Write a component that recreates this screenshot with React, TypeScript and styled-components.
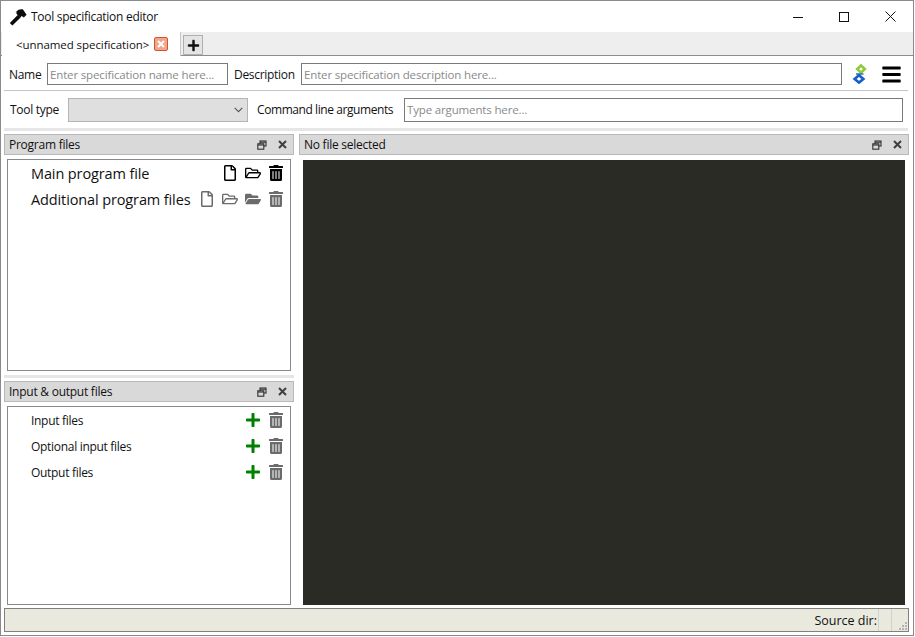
import React from 'react';
import styled, { createGlobalStyle } from 'styled-components';
import { FaBars, FaFolderOpen, FaPlus, FaRegFile, FaRegFolderOpen, FaTrashAlt } from 'react-icons/fa';

const GlobalStyle = createGlobalStyle`
  html, body {
    margin: 0;
    padding: 0;
    background: #fff;
  }
  body {
    font-family: "Open Sans", "Noto Sans", sans-serif;
    color: #111;
  }
`;

const Window = styled.div`
  box-sizing: border-box;
  width: 914px;
  height: 636px;
  border: 1px solid #8a8a8a;
  background: #fff;
  display: flex;
  flex-direction: column;
`;

const TitleBar = styled.div`
  height: 31px;
  display: flex;
  align-items: center;
  padding-left: 8px;
  font-size: 12px;
`;

const TitleText = styled.span`
  flex: 1;
  margin-left: 4px;
  letter-spacing: -0.28px;
`;

const WinButton = styled.div`
  width: 46px;
  height: 31px;
  display: flex;
  align-items: center;
  justify-content: center;
`;

const TabBar = styled.div`
  height: 24px;
  box-sizing: border-box;
  background: #eeeeee;
  border-bottom: 1px solid #8c8c8c;
  display: flex;
  align-items: flex-start;
  padding-left: 1px;
`;

const Tab = styled.div`
  width: 179px;
  height: 24px;
  background: #fff;
  box-sizing: border-box;
  border-right: 1px solid #c8c8c8;
  display: flex;
  align-items: center;
  padding-left: 14px;
  gap: 5px;
  font-size: 11.5px;
  letter-spacing: -0.07px;
`;

const TabClose = styled.div`
  width: 14px;
  height: 14px;
  box-sizing: border-box;
  background: #f0a68c;
  border: 1px solid #d4532f;
  border-radius: 2px;
  color: #fff;
  display: flex;
  align-items: center;
  justify-content: center;
`;

const AddTab = styled.div`
  width: 20px;
  height: 20px;
  margin-left: 2px;
  margin-top: 3px;
  box-sizing: border-box;
  background: #e4e4e4;
  border: 1px solid #b0b0b0;
  display: flex;
  align-items: center;
  justify-content: center;
`;

const FormRow = styled.div<{ $height: number; $rule?: boolean }>`
  height: ${(p) => p.$height}px;
  margin: 0 5px 0 3px;
  padding-top: ${(p) => (p.$rule ? 2 : 0)}px;
  display: flex;
  align-items: center;
  font-size: 12px;
  box-sizing: border-box;
  border-bottom: ${(p) => (p.$rule ? '1px solid #c4c4c4' : 'none')};
`;

const Label = styled.label<{ $left: number; $width: number }>`
  margin-left: ${(p) => p.$left}px;
  width: ${(p) => p.$width}px;
  flex: none;
  letter-spacing: -0.3px;
  white-space: nowrap;
`;

const WideLabel = styled(Label)`
  letter-spacing: -0.42px;
`;

const TextInput = styled.input<{ $width: number; $height: number }>`
  box-sizing: border-box;
  width: ${(p) => p.$width}px;
  height: ${(p) => p.$height}px;
  flex: none;
  border: 1px solid #7a7a7a;
  padding: 0 2px;
  font: 11.5px "Open Sans", sans-serif;
  letter-spacing: -0.15px;
  outline: none;
  &::placeholder {
    color: #8a8a8a;
    opacity: 1;
  }
`;

const Combo = styled.div`
  box-sizing: border-box;
  width: 180px;
  height: 24px;
  flex: none;
  background: #dfdfdf;
  border: 1px solid #b4b4b4;
  display: flex;
  align-items: center;
  justify-content: flex-end;
  padding-right: 4px;
`;

const HeadIcons = styled.div`
  display: flex;
  align-items: center;
  margin-left: 9px;
  gap: 12px;
`;

const Band = styled.div`
  height: 3px;
  margin: 0 5px 0 3px;
  background: #e6e6e6;
`;

const DockArea = styled.div`
  flex: 1;
  min-height: 0;
  margin: 3px 4px 0 3px;
  display: grid;
  grid-template-columns: 290px 1fr;
  column-gap: 5px;
`;

const LeftColumn = styled.div`
  display: grid;
  grid-template-rows: 240px 7px 1fr;
  min-height: 0;
`;

const Splitter = styled.div`
  height: 3px;
  margin-top: 1px;
  background: #e6e6e6;
`;

const Dock = styled.section`
  display: flex;
  flex-direction: column;
  min-height: 0;
`;

const DockTitle = styled.div`
  height: 21px;
  flex: none;
  box-sizing: border-box;
  background: #d9d9d9;
  border: 1px solid #b8b8b8;
  display: flex;
  align-items: center;
  padding: 0 6px 0 4px;
  font-size: 12px;
  letter-spacing: -0.25px;
`;

const DockName = styled.span`
  flex: 1;
`;

const DockButtons = styled.div`
  display: flex;
  align-items: center;
  gap: 11px;
`;

const Tree = styled.div`
  flex: 1;
  box-sizing: border-box;
  margin: 4px 3px 3px 3px;
  border: 1px solid #868a8e;
`;

const TreeRow = styled.div<{ $large?: boolean }>`
  height: 26px;
  box-sizing: border-box;
  display: flex;
  align-items: center;
  padding: 0 6px ${(p) => (p.$large ? 1 : 0)}px 23px;
  font-size: ${(p) => (p.$large ? '14.5px' : '12px')};
  letter-spacing: ${(p) => (p.$large ? '-0.12px' : '-0.3px')};
`;

const RowLabel = styled.span<{ $drop?: number }>`
  flex: 1;
  margin-top: ${(p) => p.$drop ?? 0}px;
  white-space: nowrap;
`;

const RowIcons = styled.div`
  display: flex;
  align-items: center;
  gap: 7px;
`;

const IconSlot = styled.span<{ $color: string }>`
  width: 16px;
  height: 16px;
  display: flex;
  align-items: center;
  justify-content: center;
  color: ${(p) => p.$color};
`;

const Editor = styled.div`
  flex: 1;
  margin: 5px 4px 3px 4px;
  background: #2a2b24;
`;

const StatusBar = styled.footer`
  height: 24px;
  flex: none;
  box-sizing: border-box;
  margin: 0 4px 3px 3px;
  background: #e9e9dd;
  border: 1px solid #808080;
  display: flex;
  align-items: center;
  justify-content: flex-end;
  font-size: 12.5px;
`;

const StatusText = styled.span`
  margin-right: 1px;
`;

const StatusCell = styled.div<{ $width: number }>`
  width: ${(p) => p.$width}px;
  height: 100%;
  box-sizing: border-box;
  border-left: 1px solid #d2d2c8;
  display: flex;
  align-items: flex-end;
  justify-content: flex-end;
`;

const DOCK_CLOSE = '#404040';
const FILE_GREY = '#6b6b6b';

const FloatIcon = () => (
  <svg width="10" height="10" viewBox="0 0 10 10" fill="none" stroke="#303030" strokeWidth="1.1">
    <rect x="3" y="1" width="6" height="5" />
    <path d="M3 2.2h6" />
    <rect x="0.8" y="3.8" width="6" height="5.4" fill="#d9d9d9" />
    <path d="M0.8 5h6" />
  </svg>
);

const CloseIcon = () => (
  <svg width="9" height="9" viewBox="0 0 9 9" stroke={DOCK_CLOSE} strokeWidth="2">
    <path d="M1 1l7 7M8 1l-7 7" />
  </svg>
);

const Hammer = () => (
  <svg width="18" height="18" viewBox="0 0 18 18" fill="#0c0c0c">
    <path d="M0.8 15L9 6.8l2.6 2.6-8.2 8.2z" />
    <path d="M6.5 4.5C8.5 1.5 12 0.5 14 1.5l3.6 5.2-2.8 2.8-2-1.6-1.6 1.6-4-4 1-1z" />
  </svg>
);

const Logo = () => (
  <svg width="18" height="20" viewBox="0 0 18 20" fill="none">
    <path d="M10 1.5L13.8 5 10 8.6 6.2 5z" stroke="#92c83e" strokeWidth="2.6" />
    <path d="M5 10h7.5" stroke="#1f6fa0" strokeWidth="1.4" />
    <path d="M8 11.2L12.4 15 8 18.6 3.6 15z" stroke="#1560cc" strokeWidth="2.6" />
  </svg>
);

const SmallX = () => (
  <svg width="8" height="8" viewBox="0 0 8 8" stroke="#fff" strokeWidth="2">
    <path d="M1 1l6 6M7 1L1 7" />
  </svg>
);

const DockHeader = ({ title }: { title: string }) => (
  <DockTitle>
    <DockName>{title}</DockName>
    <DockButtons>
      <FloatIcon />
      <CloseIcon />
    </DockButtons>
  </DockTitle>
);

const ioRows = ['Input files', 'Optional input files', 'Output files'];

const App = () => (
  <>
    <GlobalStyle />
    <Window>
      <TitleBar>
        <Hammer />
        <TitleText>Tool specification editor</TitleText>
        <WinButton>
          <svg width="10" height="10" viewBox="0 0 10 10" stroke="#111">
            <path d="M0 5.5h10" />
          </svg>
        </WinButton>
        <WinButton>
          <svg width="10" height="10" viewBox="0 0 10 10" fill="none" stroke="#111">
            <rect x="0.5" y="0.5" width="9" height="9" />
          </svg>
        </WinButton>
        <WinButton>
          <svg width="11" height="11" viewBox="0 0 11 11" stroke="#111">
            <path d="M0.5 0.5l10 10M10.5 0.5l-10 10" />
          </svg>
        </WinButton>
      </TitleBar>
      <TabBar>
        <Tab>
          &lt;unnamed specification&gt;
          <TabClose>
            <SmallX />
          </TabClose>
        </Tab>
        <AddTab>
          <FaPlus size={13} color="#111" />
        </AddTab>
      </TabBar>
      <FormRow $height={35} $rule>
        <Label $left={5} $width={38}>Name</Label>
        <TextInput $width={181} $height={22} placeholder="Enter specification name here..." />
        <Label $left={6} $width={67}>Description</Label>
        <TextInput $width={541} $height={22} placeholder="Enter specification description here..." />
        <HeadIcons>
          <Logo />
          <FaBars size={21} color="#000" />
        </HeadIcons>
      </FormRow>
      <FormRow $height={37}>
        <Label $left={6} $width={58}>Tool type</Label>
        <Combo>
          <svg width="9" height="6" viewBox="0 0 9 6" fill="none" stroke="#555" strokeWidth="1.1">
            <path d="M0.7 0.8l3.8 3.8 3.8-3.8" />
          </svg>
        </Combo>
        <WideLabel $left={9} $width={147}>Command line arguments</WideLabel>
        <TextInput $width={499} $height={24} placeholder="Type arguments here..." />
      </FormRow>
      <Band />
      <DockArea>
        <LeftColumn>
          <Dock>
            <DockHeader title="Program files" />
            <Tree>
              <TreeRow $large>
                <RowLabel $drop={2}>Main program file</RowLabel>
                <RowIcons>
                  <IconSlot $color="#000"><FaRegFile size={16} /></IconSlot>
                  <IconSlot $color="#000"><FaRegFolderOpen size={16} /></IconSlot>
                  <IconSlot $color="#000"><FaTrashAlt size={16} /></IconSlot>
                </RowIcons>
              </TreeRow>
              <TreeRow $large>
                <RowLabel $drop={2}>Additional program files</RowLabel>
                <RowIcons>
                  <IconSlot $color={FILE_GREY}><FaRegFile size={16} /></IconSlot>
                  <IconSlot $color={FILE_GREY}><FaRegFolderOpen size={16} /></IconSlot>
                  <IconSlot $color={FILE_GREY}><FaFolderOpen size={16} /></IconSlot>
                  <IconSlot $color={FILE_GREY}><FaTrashAlt size={16} /></IconSlot>
                </RowIcons>
              </TreeRow>
            </Tree>
          </Dock>
          <Splitter />
          <Dock>
            <DockHeader title="Input & output files" />
            <Tree>
              {ioRows.map((name) => (
                <TreeRow key={name}>
                  <RowLabel>{name}</RowLabel>
                  <RowIcons>
                    <IconSlot $color="#007f00"><FaPlus size={16} /></IconSlot>
                    <IconSlot $color={FILE_GREY}><FaTrashAlt size={16} /></IconSlot>
                  </RowIcons>
                </TreeRow>
              ))}
            </Tree>
          </Dock>
        </LeftColumn>
        <Dock>
          <DockHeader title="No file selected" />
          <Editor />
        </Dock>
      </DockArea>
      <StatusBar>
        <StatusText>Source dir:</StatusText>
        <StatusCell $width={13} />
        <StatusCell $width={17}>
          <svg width="10" height="10" viewBox="0 0 10 10" fill="#b4b4b4">
            <path d="M7 1h2v2H7zM4 4h2v2H4zM7 4h2v2H7zM1 7h2v2H1zM4 7h2v2H4zM7 7h2v2H7z" />
          </svg>
        </StatusCell>
      </StatusBar>
    </Window>
  </>
);

export default App;
